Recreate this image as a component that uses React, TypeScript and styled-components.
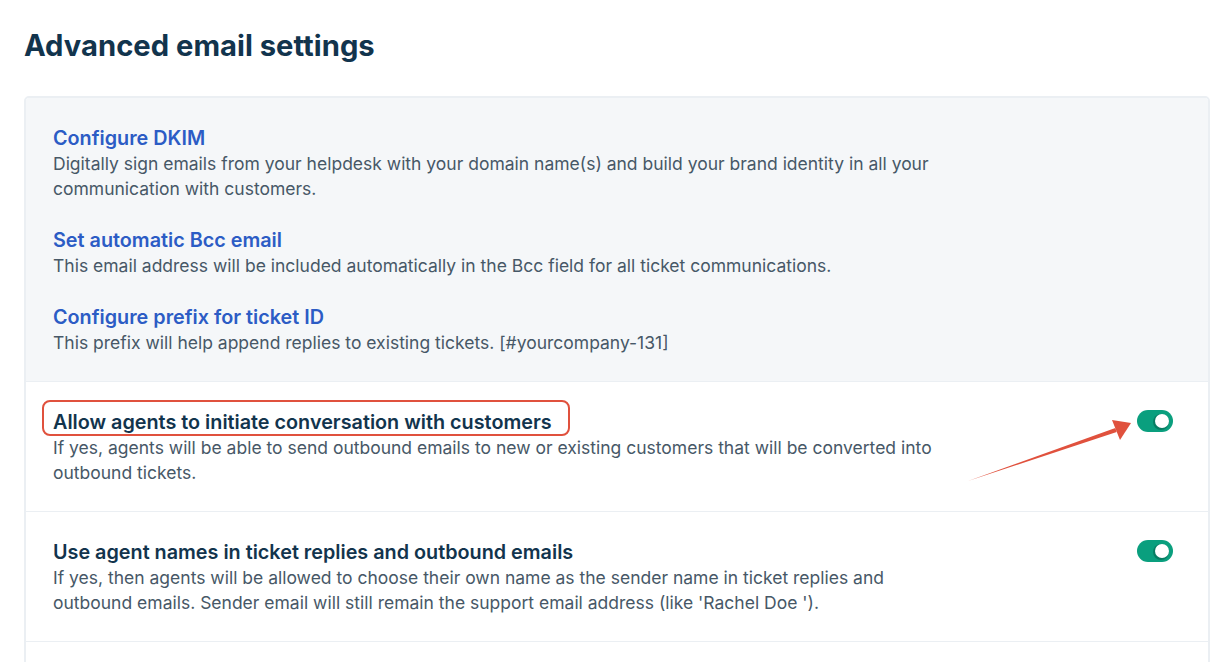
import { createGlobalStyle, styled } from "styled-components";

const GlobalStyle = createGlobalStyle`
  body {
    margin: 0;
    background: #ffffff;
    font-family: Inter, "Noto Sans", "Liberation Sans", sans-serif;
    -webkit-font-smoothing: antialiased;
  }
`;

const Page = styled.div`
  padding: 28px 14px 0 24px;
  height: 662px;
  box-sizing: border-box;
  overflow: hidden;
`;

const Heading = styled.h1`
  margin: 0 0 32px 0;
  font-size: 29.2px;
  line-height: 36px;
  font-weight: 700;
  color: #12344d;
`;

const Card = styled.div`
  border: 2px solid #ebeff3;
  border-radius: 5px;
  overflow: hidden;
`;

const LinkSection = styled.div`
  background: #f5f7f9;
  padding: 27px 27px 26px;
  display: flex;
  flex-direction: column;
  gap: 26px;
`;

const LinkItem = styled.div`
  display: flex;
  flex-direction: column;
`;

const LinkTitle = styled.a`
  font-size: 19.8px;
  line-height: 26px;
  font-weight: 600;
  color: #2c5cc5;
  text-decoration: none;
  cursor: pointer;
`;

const Description = styled.p`
  margin: 0;
  max-width: 890px;
  font-size: 17.5px;
  line-height: 25px;
  color: #475867;
`;

const ToggleRow = styled.div`
  position: relative;
  display: flex;
  align-items: flex-start;
  justify-content: space-between;
  gap: 40px;
  padding: 27px 35px 26px 27px;
  border-top: 1px solid #ebeff3;
  background: #ffffff;
`;

const RowText = styled.div`
  display: flex;
  flex-direction: column;
`;

const RowTitle = styled.span<{ $highlighted?: boolean }>`
  position: relative;
  align-self: flex-start;
  font-size: 19.8px;
  line-height: 26px;
  font-weight: 600;
  color: #12344d;

  ${(p) =>
    p.$highlighted &&
    `
    &::before {
      content: "";
      position: absolute;
      left: -11px;
      right: -18px;
      top: -9px;
      bottom: -1px;
      border: 2.5px solid #e0513d;
      border-radius: 8px;
    }
  `}
`;

const Switch = styled.button<{ $on: boolean }>`
  flex: none;
  position: relative;
  width: 36px;
  height: 22px;
  margin-top: 1px;
  border: none;
  border-radius: 11px;
  padding: 0;
  background: ${(p) => (p.$on ? "#0a9f7e" : "#cfd7df")};
  cursor: pointer;

  &::after {
    content: "";
    position: absolute;
    top: 4px;
    left: ${(p) => (p.$on ? "18px" : "4px")};
    width: 14px;
    height: 14px;
    border-radius: 50%;
    background: #ffffff;
    box-shadow: -1px 1px 0 1px rgba(0, 60, 45, 0.35);
  }
`;

const Arrow = styled.svg`
  position: absolute;
  left: 940px;
  top: 30px;
  width: 180px;
  height: 80px;
  pointer-events: none;
`;

const links = [
  {
    title: "Configure DKIM",
    text: "Digitally sign emails from your helpdesk with your domain name(s) and build your brand identity in all your communication with customers.",
  },
  {
    title: "Set automatic Bcc email",
    text: "This email address will be included automatically in the Bcc field for all ticket communications.",
  },
  {
    title: "Configure prefix for ticket ID",
    text: "This prefix will help append replies to existing tickets. [#yourcompany-131]",
  },
];

const toggles = [
  {
    title: "Allow agents to initiate conversation with customers",
    text: "If yes, agents will be able to send outbound emails to new or existing customers that will be converted into outbound tickets.",
    highlighted: true,
  },
  {
    title: "Use agent names in ticket replies and outbound emails",
    text: "If yes, then agents will be allowed to choose their own name as the sender name in ticket replies and outbound emails. Sender email will still remain the support email address (like 'Rachel Doe ').",
    highlighted: false,
  },
];

export default function App() {
  return (
    <>
      <GlobalStyle />
      <Page>
        <Heading>Advanced email settings</Heading>
        <Card>
          <LinkSection>
            {links.map((l) => (
              <LinkItem key={l.title}>
                <LinkTitle>{l.title}</LinkTitle>
                <Description>{l.text}</Description>
              </LinkItem>
            ))}
          </LinkSection>
          {toggles.map((t) => (
            <ToggleRow key={t.title}>
              <RowText>
                <RowTitle $highlighted={t.highlighted}>{t.title}</RowTitle>
                <Description>{t.text}</Description>
              </RowText>
              <Switch $on aria-label={t.title} />
              {t.highlighted && (
                <Arrow viewBox="0 0 180 80">
                  <polygon points="2,69 149.3,16.1 150.7,19.9" fill="#e0513d" />
                  <polygon points="165,11 146,8 154,28" fill="#e0513d" />
                </Arrow>
              )}
            </ToggleRow>
          ))}
          <ToggleRow />
        </Card>
      </Page>
    </>
  );
}
